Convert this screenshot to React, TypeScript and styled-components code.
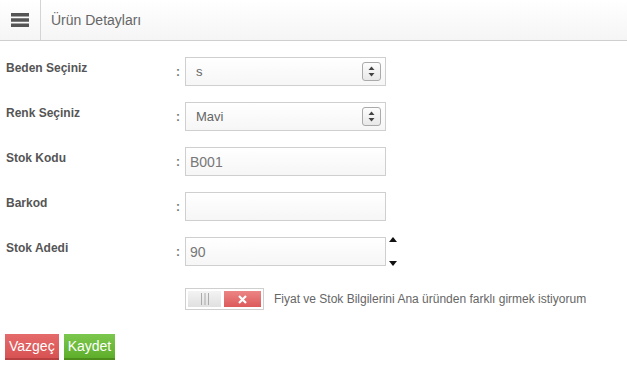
import React from 'react';
import styled, { createGlobalStyle } from 'styled-components';

const GlobalStyle = createGlobalStyle`
  html, body {
    margin: 0;
    padding: 0;
    background: #ffffff;
    font-family: "Liberation Sans", Arial, sans-serif;
  }
`;

const Page = styled.div`
  width: 627px;
  height: 373px;
  background: #fff;
`;

const Header = styled.div`
  display: flex;
  height: 40px;
  border-bottom: 1px solid #cfcfcf;
  background: linear-gradient(to bottom, #ffffff, #f5f5f5);
`;

const MenuCell = styled.div`
  width: 40px;
  border-right: 1px solid #d4d4d4;
  display: flex;
  align-items: center;
  justify-content: center;
`;

const Title = styled.div`
  display: flex;
  align-items: center;
  padding-left: 10px;
  font-size: 14px;
  color: #666;
`;

const Form = styled.div`
  display: grid;
  grid-template-columns: 170px 9px 201px auto;
  row-gap: 16px;
  align-items: center;
  padding: 16px 0 0 6px;
`;

const Label = styled.div`
  align-self: start;
  padding-top: 4px;
  font-size: 12px;
  font-weight: bold;
  color: #555;
`;

const Colon = styled.div`
  font-size: 12px;
  font-weight: bold;
  color: #777;
`;

const Field = styled.div`
  position: relative;
  height: 29px;
  box-sizing: border-box;
  border: 1px solid #cfcfcf;
  background: linear-gradient(to bottom, #ffffff, #f6f6f6);
  display: flex;
  align-items: center;
  padding-left: 4px;
  font-size: 14px;
  color: #777;
`;

const SelectText = styled.span`
  padding-left: 6px;
  font-size: 13px;
  color: #666;
`;

const SelectButton = styled.div`
  position: absolute;
  right: 4px;
  top: 4px;
  width: 19px;
  height: 19px;
  box-sizing: border-box;
  border: 1px solid #aaa;
  border-radius: 3px;
  background: linear-gradient(to bottom, #fdfdfd, #e8e8e8);
  display: flex;
  align-items: center;
  justify-content: center;
`;

const Spinner = styled.div`
  display: flex;
  flex-direction: column;
  justify-content: space-between;
  height: 29px;
  padding-left: 3px;
`;

const Empty = styled.div``;

const ToggleRow = styled.div`
  grid-column: 3 / 5;
  display: flex;
  align-items: center;
  gap: 10px;
  margin-top: 6px;
`;

const Toggle = styled.div`
  width: 79px;
  height: 22px;
  box-sizing: border-box;
  border: 1px solid #cfcfcf;
  display: flex;
  gap: 3px;
  padding: 2px;
  background: #fff;
`;

const ToggleOff = styled.div`
  width: 33px;
  background: linear-gradient(to bottom, #f3f3f3, #e0e0e0);
  display: flex;
  align-items: center;
  justify-content: center;
`;

const ToggleOn = styled.div`
  flex: 1;
  background: linear-gradient(to bottom, #ec8585, #dc5a5a);
  display: flex;
  align-items: center;
  justify-content: center;
`;

const ToggleText = styled.div`
  font-size: 12px;
  color: #666;
`;

const Buttons = styled.div`
  display: flex;
  gap: 5px;
  padding: 24px 0 0 5px;
`;

const Button = styled.button<{ variant: 'danger' | 'success' }>`
  height: 26px;
  padding: 0 4px;
  border: none;
  border-bottom: 2px solid ${p => (p.variant === 'danger' ? '#b94040' : '#4c8d1c')};
  background: ${p =>
    p.variant === 'danger'
      ? 'linear-gradient(to bottom, #e56a6a, #d85353)'
      : 'linear-gradient(to bottom, #7cc84e, #5eae2a)'};
  color: #fff;
  font-family: "Liberation Sans", Arial, sans-serif;
  font-size: 14px;
`;

const Arrows = () => (
  <svg width="7" height="11" viewBox="0 0 7 11">
    <path d="M3.5 0.5 L6.5 4 L0.5 4 Z" fill="#444" />
    <path d="M3.5 10.5 L6.5 7 L0.5 7 Z" fill="#444" />
  </svg>
);

const App: React.FC = () => {
  return (
    <Page>
      <GlobalStyle />
      <Header>
        <MenuCell>
          <svg width="18" height="14" viewBox="0 0 18 14">
            <rect x="0" y="0" width="18" height="3.5" fill="#555" />
            <rect x="0" y="5.25" width="18" height="3.5" fill="#555" />
            <rect x="0" y="10.5" width="18" height="3.5" fill="#555" />
          </svg>
        </MenuCell>
        <Title>Ürün Detayları</Title>
      </Header>

      <Form>
        <Label>Beden Seçiniz</Label>
        <Colon>:</Colon>
        <Field>
          <SelectText>s</SelectText>
          <SelectButton><Arrows /></SelectButton>
        </Field>
        <Empty />

        <Label>Renk Seçiniz</Label>
        <Colon>:</Colon>
        <Field>
          <SelectText>Mavi</SelectText>
          <SelectButton><Arrows /></SelectButton>
        </Field>
        <Empty />

        <Label>Stok Kodu</Label>
        <Colon>:</Colon>
        <Field>B001</Field>
        <Empty />

        <Label>Barkod</Label>
        <Colon>:</Colon>
        <Field />
        <Empty />

        <Label>Stok Adedi</Label>
        <Colon>:</Colon>
        <Field>90</Field>
        <Spinner>
          <svg width="8" height="5" viewBox="0 0 8 5"><path d="M4 0 L8 5 L0 5 Z" fill="#111" /></svg>
          <svg width="8" height="5" viewBox="0 0 8 5"><path d="M0 0 L8 0 L4 5 Z" fill="#111" /></svg>
        </Spinner>

        <Empty />
        <Empty />
        <ToggleRow>
          <Toggle>
            <ToggleOff>
              <svg width="8" height="12" viewBox="0 0 8 12">
                <rect x="0" y="0" width="1" height="12" fill="#aaa" />
                <rect x="3.5" y="0" width="1" height="12" fill="#aaa" />
                <rect x="7" y="0" width="1" height="12" fill="#aaa" />
              </svg>
            </ToggleOff>
            <ToggleOn>
              <svg width="9" height="9" viewBox="0 0 9 9">
                <path d="M1 1 L8 8 M8 1 L1 8" stroke="#fff" strokeWidth="2.2" />
              </svg>
            </ToggleOn>
          </Toggle>
          <ToggleText>Fiyat ve Stok Bilgilerini Ana üründen farklı girmek istiyorum</ToggleText>
        </ToggleRow>
      </Form>

      <Buttons>
        <Button variant="danger">Vazgeç</Button>
        <Button variant="success">Kaydet</Button>
      </Buttons>
    </Page>
  );
};

export default App;
